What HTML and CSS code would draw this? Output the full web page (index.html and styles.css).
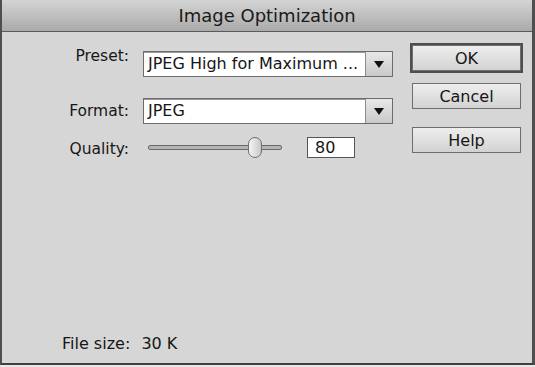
FILE: index.html
```html
<!DOCTYPE html>
<html lang="en">
<head>
    <meta charset="UTF-8">
    <meta name="viewport" content="width=device-width, initial-scale=1.0">
    <title>Image Optimization</title>
    <link rel="stylesheet" href="styles.css">
</head>
<body>

<div class="window">
    <div class="titlebar">Image Optimization</div>

    <div class="content">
        <div class="form">
            <div class="row row-preset">
                <label class="field-label">Preset:</label>
                <div class="select">
                    <span class="select-value">JPEG High for Maximum ...</span>
                    <span class="select-arrow"></span>
                </div>
            </div>

            <div class="row row-format">
                <label class="field-label">Format:</label>
                <div class="select">
                    <span class="select-value">JPEG</span>
                    <span class="select-arrow"></span>
                </div>
            </div>

            <div class="row row-quality">
                <label class="field-label">Quality:</label>
                <div class="slider">
                    <div class="slider-track"></div>
                    <div class="slider-thumb"></div>
                </div>
                <div class="number-box">80</div>
            </div>
        </div>

        <div class="buttons">
            <button class="btn btn-default">OK</button>
            <button class="btn">Cancel</button>
            <button class="btn btn-help">Help</button>
        </div>
    </div>

    <div class="footer">
        <span class="footer-label">File size:</span>
        <span class="footer-value">30 K</span>
    </div>
</div>

</body>
</html>
```

FILE: styles.css
```css
body {
    margin: 0;
    background-color: #e9e9e9;
    font-family: "DejaVu Sans", sans-serif;
    color: #161616;
}
.window {
    display: flex;
    flex-direction: column;
    width: 530px;
    height: 363px;
    background-color: #d6d6d6;
    border-left: 2px solid #4f4f4f;
    border-right: 3px solid #4f4f4f;
    border-bottom: 2px solid #3f3f3f;
}
.titlebar {
    height: 31px;
    line-height: 31px;
    text-align: center;
    font-size: 18px;
    color: #1a1a1a;
    background: linear-gradient(#d4d4d4, #aaaaaa);
    border-bottom: 1px solid #5a5a5a;
}
.content {
    display: flex;
    align-items: flex-start;
}
.form {
    padding-top: 19px;
}
.row {
    display: grid;
    grid-template-columns: 128px auto;
    justify-content: start;
    column-gap: 13px;
    align-items: center;
}
.row-preset {
    align-items: start;
    margin-bottom: 21px;
}
.row-preset .field-label {
    margin-top: -4px;
}
.row-format {
    margin-bottom: 13px;
}
.row-quality {
    grid-template-columns: 128px auto auto;
}
.row-quality .field-label {
    margin-top: 3px;
}
.field-label {
    text-align: right;
    font-size: 15.5px;
    padding-right: 1px;
}
.select {
    display: flex;
    width: 250px;
    height: 26px;
    box-sizing: border-box;
    background-color: #fff;
    border: 1px solid #6c6c6c;
    box-shadow: inset 0 1px 0 #9a9a9a;
}
.select-value {
    flex: 1;
    padding-left: 4px;
    font-size: 16px;
    line-height: 23px;
    white-space: nowrap;
    overflow: hidden;
}
.select-arrow {
    position: relative;
    width: 26px;
    border-left: 1px solid #8c8c8c;
    background: linear-gradient(#e8e8e8, #c9c9c9);
}
.select-arrow::after {
    content: "";
    position: absolute;
    left: 8px;
    top: 9px;
    border-left: 5px solid transparent;
    border-right: 5px solid transparent;
    border-top: 7px solid #111;
}
.slider {
    position: relative;
    width: 134px;
    height: 21px;
    margin-left: 5px;
}
.slider-track {
    margin-top: 8px;
    height: 5px;
    box-sizing: border-box;
    border: 1px solid #6a6a6a;
    background-color: #b4b4b4;
    border-radius: 2px;
}
.slider-thumb {
    position: absolute;
    left: 100px;
    top: 0;
    width: 14px;
    height: 21px;
    box-sizing: border-box;
    border: 1px solid #6f6f6f;
    border-radius: 7px;
    background: linear-gradient(90deg, #f4f4f4, #c8c8c8);
}
.number-box {
    margin-left: 12px;
    width: 48px;
    height: 21px;
    box-sizing: border-box;
    border: 1px solid #555;
    background-color: #fff;
    padding-left: 7px;
    font-size: 16px;
    line-height: 19px;
}
.buttons {
    display: flex;
    flex-direction: column;
    margin-left: 19px;
    padding-top: 13px;
}
.btn {
    width: 109px;
    height: 26px;
    margin: 0 0 12px;
    padding: 0;
    border: 1px solid #6e6e6e;
    background: linear-gradient(#eeeeee, #d2d2d2);
    font-family: "DejaVu Sans", sans-serif;
    font-size: 16px;
    color: #161616;
}
.btn-default {
    box-shadow: 0 0 0 2px #4e4e4e;
}
.btn-help {
    margin-top: 6px;
}
.footer {
    margin-top: auto;
    padding: 0 0 10px 60px;
    font-size: 16px;
}
.footer-label {
    margin-right: 6px;
}
```
